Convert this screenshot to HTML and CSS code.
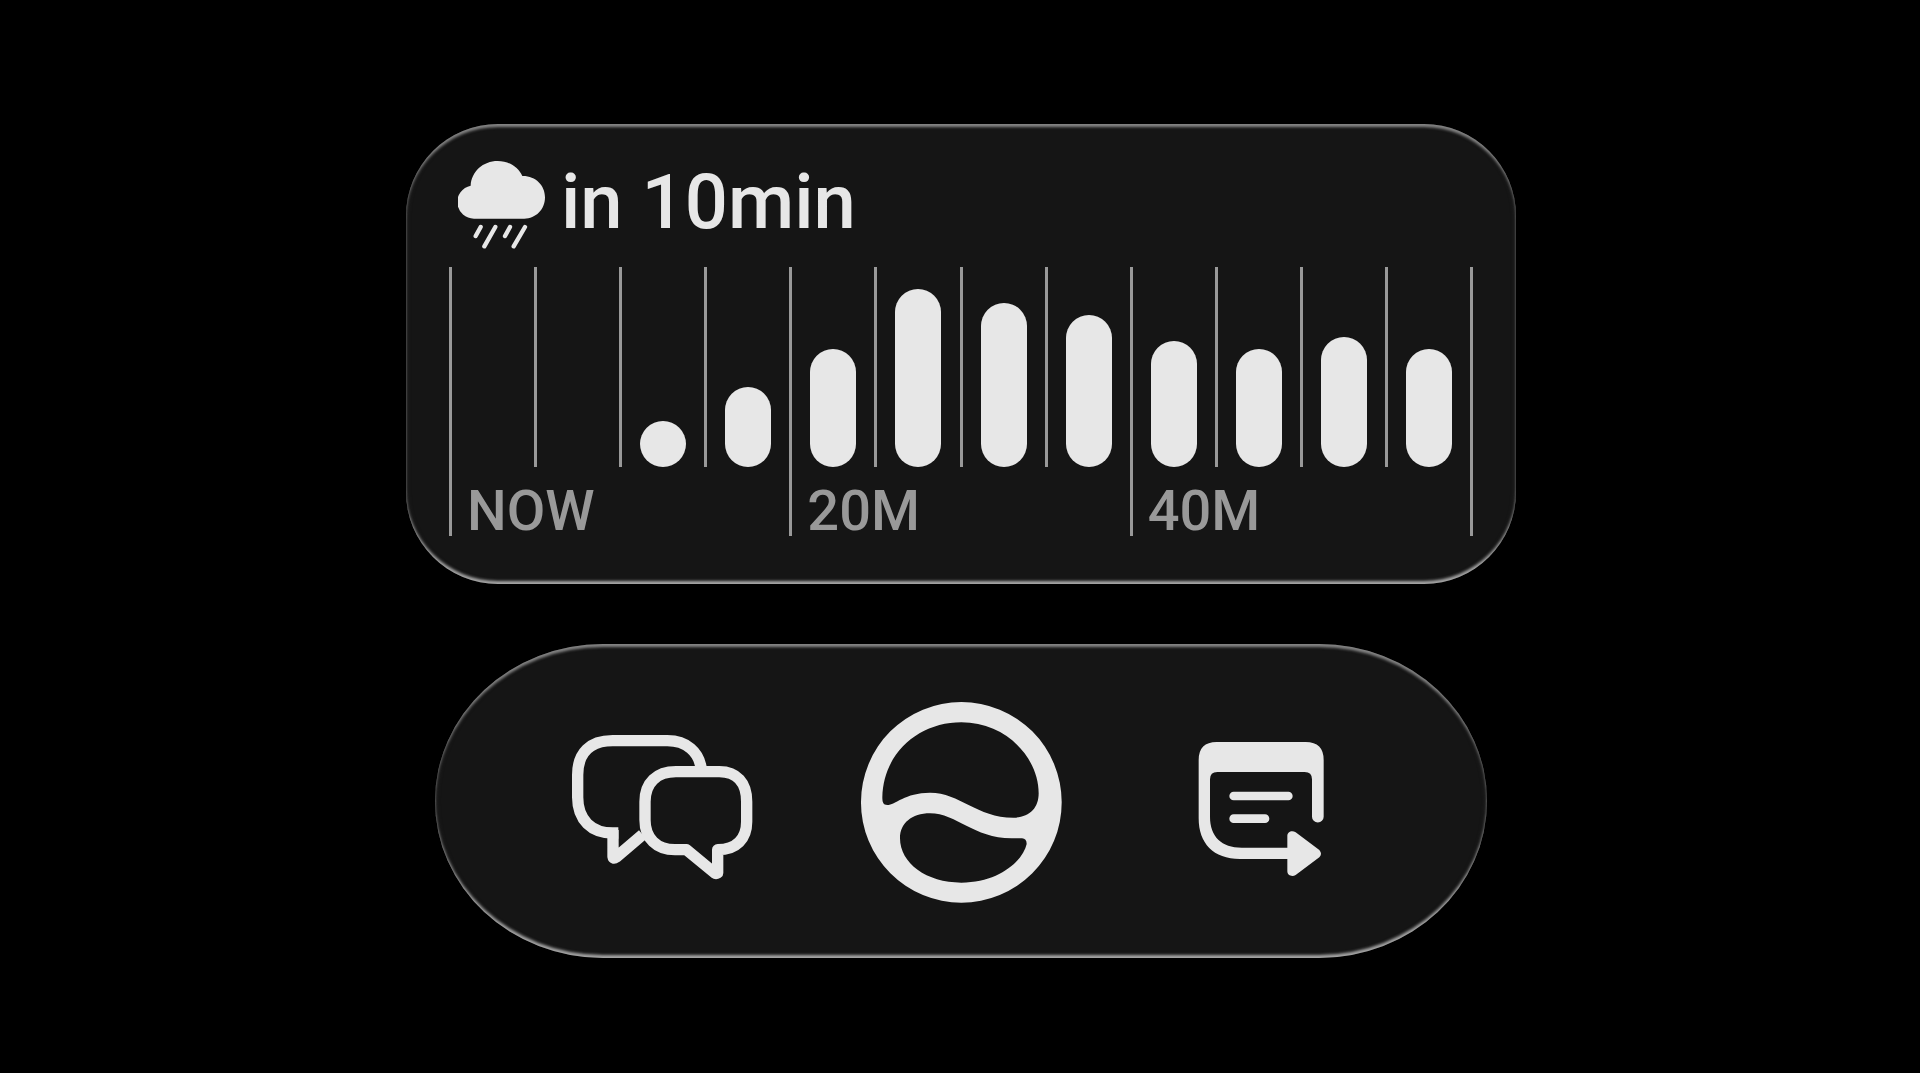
FILE: index.html
```html
<!DOCTYPE html>
<html lang="en">
<head>
<meta charset="utf-8">
<meta name="viewport" content="width=device-width, initial-scale=1">
<title>Rain forecast</title>
<link rel="stylesheet" href="styles.css">
</head>
<body>
<main class="stage">
  <section class="panel forecast" aria-labelledby="forecast-title">
    <header class="forecast-head">
      <svg class="cloud" viewBox="203 150 264 270" aria-hidden="true">
        <path class="solid" d="M252 326A50 50 0 0 1 241 227C243 185 278 153 322 153C356 153 384 171 396 198C435 197 464 225 464 262C464 299 436 326 402 326Z"/>
        <path class="rain" d="M271 351L256 378M315 351L282 409M359 351L344 378M404 351L370 409"/>
      </svg>
      <h1 class="forecast-title" id="forecast-title">in 10min</h1>
    </header>
    <ol class="chart">
      <li class="slot"><div class="plot"></div><span class="tick">NOW</span></li>
      <li class="slot"><div class="plot"></div></li>
      <li class="slot"><div class="plot"><i class="bar" style="height:23%"></i></div></li>
      <li class="slot"><div class="plot"><i class="bar" style="height:40%"></i></div></li>
      <li class="slot"><div class="plot"><i class="bar" style="height:59%"></i></div><span class="tick">20M</span></li>
      <li class="slot"><div class="plot"><i class="bar" style="height:89%"></i></div></li>
      <li class="slot"><div class="plot"><i class="bar" style="height:82%"></i></div></li>
      <li class="slot"><div class="plot"><i class="bar" style="height:76%"></i></div></li>
      <li class="slot"><div class="plot"><i class="bar" style="height:63%"></i></div><span class="tick">40M</span></li>
      <li class="slot"><div class="plot"><i class="bar" style="height:59%"></i></div></li>
      <li class="slot"><div class="plot"><i class="bar" style="height:65%"></i></div></li>
      <li class="slot"><div class="plot"><i class="bar" style="height:59%"></i></div></li>
    </ol>
  </section>

  <nav class="panel dock" aria-label="Actions">
    <button class="dock-button" type="button" aria-label="Messages">
      <svg class="dock-icon" viewBox="33 -24 600 600" aria-hidden="true">
        <path class="line" d="M454 180C449 125 408 92 352 92H188C120 92 83 128 83 195V262C83 330 125 369 189 369H205"/>
        <path class="line" d="M189 360V440Q190 448 198 442L278 374"/>
        <path class="line" d="M503 419V489Q498 492 494 489L409 419H375C320 419 285 385 285 330V275C285 218 320 185 378 185H508C560 185 590 218 590 275V335C590 385 560 419 503 419Z"/>
      </svg>
    </button>
    <button class="dock-button" type="button" aria-label="Home">
      <svg class="dock-icon" viewBox="33 36 600 600" aria-hidden="true">
        <path class="solid" fill-rule="evenodd" d="M334 36A301 301 0 1 1 334 638A301 301 0 1 1 334 36ZM97 322C100 185 210 97 334 97C470 97 566 205 566 310C566 355 538 383 490 383C380 383 330 308 240 308C165 308 135 345 112 345C100 345 97 338 97 322ZM150 445C150 400 185 370 240 370C320 370 370 445 485 445H516Q530 446 530 462C520 510 450 578 334 578C230 578 150 520 150 445Z"/>
      </svg>
    </button>
    <button class="dock-button" type="button" aria-label="Forward note">
      <svg class="dock-icon" viewBox="-57 -54 600 600" aria-hidden="true">
        <path class="solid" d="M56 295V120Q56 66 110 66H377Q431 66 431 120V290A17 17 0 0 1 396 290V178Q396 156 374 156H112Q90 156 90 178V290C90 350 125 383 185 383H322V348C322 334 337 330 347 337L418 390Q428 402 418 412L347 465C337 471 322 467 322 454V417H180C100 417 56 370 56 295Z"/>
        <path class="text-line" d="M161 228H325M161 296H255"/>
      </svg>
    </button>
  </nav>
</main>
</body>
</html>
```
FILE: styles.css
```css
:root {
  --ink: #e7e7e7;
  --muted: #999;
  --panel: #151515;
}

* {
  box-sizing: border-box;
}

body {
  margin: 0;
  background: #000;
  color: var(--ink);
  font-family: Roboto, "Liberation Sans", sans-serif;
}

.stage {
  min-height: 100vh;
  display: flex;
  flex-direction: column;
  align-items: center;
  gap: 60px;
  padding: 124px 24px 60px 26px;
}

.panel {
  width: 100%;
  background: var(--panel);
  box-shadow:
    inset 0 4px 3px -1px #858585,
    inset 0 -4px 3px -1px #a6a6a6,
    inset 0 0 4px 1px #2a2a2a;
}

.solid {
  fill: var(--ink);
}

/* Forecast */

.forecast {
  max-width: 1110px;
  padding: 36px 43px 48px;
  border-radius: 92px;
}

.forecast-head {
  display: flex;
  align-items: flex-start;
  gap: 15px;
  padding-left: 9px;
  margin-bottom: 17px;
}

.cloud {
  width: 88px;
  height: 90px;
  flex: none;
}

.rain {
  fill: none;
  stroke: var(--ink);
  stroke-width: 13;
  stroke-linecap: round;
}

.forecast-title {
  margin: 0;
  font-size: 76px;
  line-height: 84px;
  font-weight: 500;
  white-space: nowrap;
}

.chart {
  display: grid;
  grid-template-columns: repeat(12, minmax(0, 1fr));
  align-items: start;
  margin: 0;
  padding: 0;
  list-style: none;
  border-right: 3px solid var(--muted);
}

.slot {
  border-left: 3px solid var(--muted);
}

.plot {
  height: 200px;
  display: flex;
  align-items: flex-end;
  justify-content: center;
}

.bar {
  width: 46px;
  border-radius: 23px;
  background: var(--ink);
}

.tick {
  display: block;
  padding: 20px 0 0 15px;
  color: var(--muted);
  font-size: 56px;
  line-height: 49px;
  font-weight: 500;
  white-space: nowrap;
}

/* Dock */

.dock {
  max-width: 1052px;
  display: grid;
  grid-template-columns: repeat(3, minmax(0, 1fr));
  padding: 58px 76px 56px;
  border-radius: 168px / 157px;
}

.dock-button {
  display: flex;
  justify-content: center;
  padding: 0;
  border: 0;
  background: none;
  cursor: pointer;
}

.dock-icon {
  width: 200px;
  height: 200px;
  overflow: visible;
}

.line {
  fill: none;
  stroke: var(--ink);
  stroke-width: 34;
  stroke-linejoin: round;
}

.text-line {
  fill: none;
  stroke: var(--ink);
  stroke-width: 26;
  stroke-linecap: round;
}
```
